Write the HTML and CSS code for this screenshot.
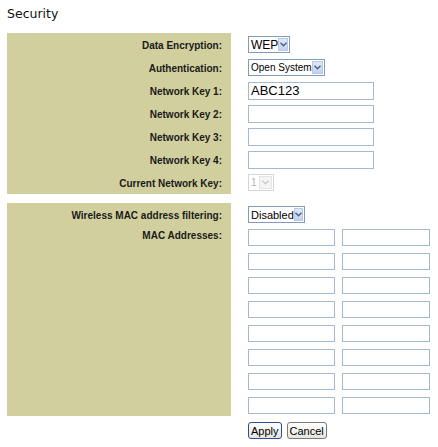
FILE: index.html
```html
<!DOCTYPE html>
<html lang="en">
<head>
    <meta name="viewport" content="width=device-width, initial-scale=1">
    <title>Security</title>
    <link rel="stylesheet" href="styles.css">
</head>

<body>

    <p class="header">Security</p>

    <div class="panel">
        <div class="label">Data Encryption:</div>
        <div class="field">
            <div class="sel sel-wep"><span class="sel-text">WEP</span><span class="arrow"><svg width="7" height="5" viewBox="0 0 7 5"><path d="M0.5 0.8 L3.5 3.8 L6.5 0.8" fill="none" stroke="#4d6185" stroke-width="1.4"/></svg></span></div>
        </div>

        <div class="label">Authentication:</div>
        <div class="field">
            <div class="sel sel-auth"><span class="sel-text small">Open System</span><span class="arrow"><svg width="7" height="5" viewBox="0 0 7 5"><path d="M0.5 0.8 L3.5 3.8 L6.5 0.8" fill="none" stroke="#4d6185" stroke-width="1.4"/></svg></span></div>
        </div>

        <div class="label">Network Key 1:</div>
        <div class="field"><input class="key" type="text" value="ABC123"></div>

        <div class="label">Network Key 2:</div>
        <div class="field"><input class="key" type="text"></div>

        <div class="label">Network Key 3:</div>
        <div class="field"><input class="key" type="text"></div>

        <div class="label">Network Key 4:</div>
        <div class="field"><input class="key" type="text"></div>

        <div class="label">Current Network Key:</div>
        <div class="field">
            <div class="sel sel-cur"><span class="sel-text small">1</span><span class="arrow"><svg width="7" height="5" viewBox="0 0 7 5"><path d="M0.5 0.8 L3.5 3.8 L6.5 0.8" fill="none" stroke="#c9c9c9" stroke-width="1.4"/></svg></span></div>
        </div>
    </div>

    <div class="panel panel-mac">
        <div class="label">Wireless MAC address filtering:</div>
        <div class="field">
            <div class="sel sel-filter"><span class="sel-text mid">Disabled</span><span class="arrow"><svg width="7" height="5" viewBox="0 0 7 5"><path d="M0.5 0.8 L3.5 3.8 L6.5 0.8" fill="none" stroke="#4d6185" stroke-width="1.4"/></svg></span></div>
        </div>

        <div class="label label-top">MAC Addresses:</div>
        <div class="mac-grid">
            <input class="mac" type="text"><input class="mac" type="text">
            <input class="mac" type="text"><input class="mac" type="text">
            <input class="mac" type="text"><input class="mac" type="text">
            <input class="mac" type="text"><input class="mac" type="text">
            <input class="mac" type="text"><input class="mac" type="text">
            <input class="mac" type="text"><input class="mac" type="text">
            <input class="mac" type="text"><input class="mac" type="text">
            <input class="mac" type="text"><input class="mac" type="text">
        </div>
    </div>

    <div class="buttons">
        <button class="btn btn-apply">Apply</button>
        <button class="btn">Cancel</button>
    </div>

</body>
</html>
```

FILE: styles.css
```css
body {
    margin: 0;
    padding: 0 7px;
    background: white;
    font-family: 'DejaVu Sans', Verdana, sans-serif;
    color: #000;
}

.header {
    margin: 0;
    padding-top: 6px;
    height: 27px;
    font-size: 12.5px;
    line-height: 15px;
    color: #111;
}

.panel {
    display: grid;
    grid-template-columns: 224px 186px;
    grid-auto-rows: 23px;
    column-gap: 17px;
    width: 427px;
}

.panel-mac {
    margin-top: 9px;
    grid-template-rows: 23px auto;
}

.label {
    background-color: #d1cf9e;
    font-family: 'Liberation Sans', Arial, sans-serif;
    font-weight: bold;
    font-size: 10px;
    padding-right: 9px;
    padding-top: 1px;
    display: flex;
    align-items: center;
    justify-content: flex-end;
    color: #1a1a1a;
}

.label-top {
    align-items: flex-start;
    padding-top: 4px;
    padding-bottom: 2px;
}

.field {
    display: flex;
    align-items: center;
}

/* drop-down boxes drawn by hand so the arrow matches */
.sel {
    box-sizing: border-box;
    display: flex;
    align-items: center;
    justify-content: space-between;
    height: 17px;
    border: 1px solid #7f9db9;
    background: white;
    font-family: 'Liberation Sans', Arial, sans-serif;
    font-size: 12px;
    color: #000;
}

.sel-text {
    padding-left: 2px;
    white-space: nowrap;
}

.sel-text.small { font-size: 10px; }
.sel-text.mid { font-size: 11px; }

.arrow {
    width: 13px;
    height: 13px;
    margin-right: 1px;
    background: linear-gradient(#dfe8f7, #c3d3ef);
    border: 1px solid #b7c8e6;
    box-sizing: border-box;
    display: flex;
    align-items: center;
    justify-content: center;
}

.sel-wep { width: 42px; }
.sel-auth { width: 77px; }
.sel-filter { width: 57px; }

.sel-cur {
    width: 26px;
    border-color: #d6d6d6;
    color: #b0b0b0;
}

.sel-cur .arrow {
    background: #f4f4f4;
    border-color: #e4e4e4;
}

input {
    box-sizing: border-box;
    border: 1px solid #a5b9d1;
    border-radius: 0;
    padding: 0 2px;
    margin: 0;
    font-family: 'Liberation Sans', Arial, sans-serif;
    font-size: 13px;
    background: white;
}

.key {
    width: 126px;
    height: 18px;
}

.mac-grid {
    display: grid;
    grid-template-columns: 87px 88px;
    column-gap: 7px;
    row-gap: 7px;
    padding-top: 3px;
    padding-bottom: 2px;
}

.mac {
    width: 87px;
    height: 17px;
}

.mac:nth-child(2n) {
    width: 88px;
}

.buttons {
    display: flex;
    gap: 5px;
    margin-top: 6px;
    padding-left: 241px;
}

.btn {
    font-family: 'Liberation Sans', Arial, sans-serif;
    font-size: 11px;
    height: 17px;
    padding: 0 2px;
    border: 1px solid #7a7a7a;
    border-radius: 3px;
    background: linear-gradient(#ffffff, #e6e6de);
    color: #000;
}

.btn-apply {
    border-color: #2a4a9a;
}
```
